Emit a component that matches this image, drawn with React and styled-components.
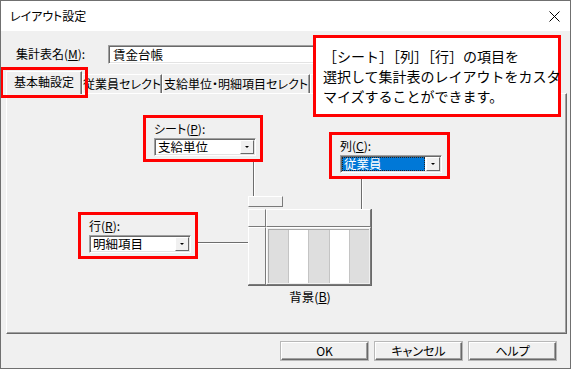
import React from 'react';
import styled, { createGlobalStyle } from 'styled-components';

const GlobalStyle = createGlobalStyle`
  html, body {
    margin: 0;
    padding: 0;
    background: #ffffff;
  }
  body {
    font-family: "Noto Sans CJK JP", "Noto Sans", sans-serif;
    font-size: 12px;
    color: #000;
  }
  * {
    box-sizing: border-box;
  }
`;

const Window = styled.div`
  position: relative;
  width: 571px;
  height: 369px;
  border: 1px solid #707070;
  background: #f0f0f0;
  display: flex;
  flex-direction: column;
  overflow: hidden;
  font-feature-settings: "palt";
`;

const TitleBar = styled.div`
  flex: none;
  height: 30px;
  background: #fff;
  display: flex;
  align-items: center;
  justify-content: space-between;
  padding: 0 10px 0 9px;
`;

const Title = styled.span`
  font-size: 12px;
  line-height: 14px;
`;

const Body = styled.div`
  flex: 1;
  display: flex;
  flex-direction: column;
  padding: 0 3px 0 5px;
`;

const NameRow = styled.div`
  display: flex;
  align-items: center;
  height: 18px;
  margin-top: 14px;
  padding-left: 10px;
`;

const FieldLabel = styled.span`
  width: 92px;
  font-size: 12px;
  line-height: 14px;
`;

const Sunken = styled.div`
  background: #fff;
  border-top: 1px solid #a0a0a0;
  border-left: 1px solid #a0a0a0;
  border-bottom: 1px solid #fff;
  border-right: 1px solid #fff;
  box-shadow: inset 1px 1px 0 #696969, inset -1px -1px 0 #e3e3e3;
`;

const TextInput = styled(Sunken)`
  flex: 1;
  height: 19px;
  margin-right: 9px;
  padding-left: 4px;
  font-size: 12.5px;
  line-height: 17px;
`;

const TabStrip = styled.div`
  position: relative;
  z-index: 1;
  display: flex;
  align-items: flex-end;
  height: 22px;
  margin-top: 8px;
`;

const Tab = styled.div`
  flex: none;
  width: ${p => p.$w}px;
  height: ${p => (p.$active ? 23 : 19)}px;
  margin-bottom: ${p => (p.$active ? -1 : 0)}px;
  padding-bottom: ${p => (p.$active ? 3 : 1)}px;
  background: #f0f0f0;
  border-top: 1px solid #fff;
  border-left: 1px solid #fff;
  border-right: 1px solid #696969;
  box-shadow: inset -1px 0 0 #a0a0a0;
  display: flex;
  align-items: center;
  justify-content: center;
  white-space: nowrap;
  overflow: hidden;
  font-size: 12px;
`;

const Panel = styled.div`
  position: relative;
  height: 241px;
  border-top: 1px solid #fff;
  border-left: 1px solid #fff;
  border-right: 1px solid #696969;
  border-bottom: 1px solid #696969;
  box-shadow: inset -1px -1px 0 #a0a0a0;
`;

const Group = styled.div`
  position: absolute;
  left: ${p => p.$x}px;
  top: ${p => p.$y}px;
  width: ${p => p.$w}px;
  border: 3px solid #ff0000;
  padding: 3px 3px 3px 8px;
  display: flex;
  flex-direction: column;
  gap: 2px;
`;

const GroupLabel = styled.span`
  font-size: 12px;
  line-height: 15px;
`;

const Combo = styled(Sunken)`
  width: 102px;
  height: 18px;
  display: flex;
  padding: 1px;
`;

const ComboValue = styled.div`
  flex: 1;
  margin-right: 1px;
  padding-left: 2px;
  font-size: 12.5px;
  line-height: 14px;
  background: ${p => (p.$selected ? '#0078d7' : 'transparent')};
  color: ${p => (p.$selected ? '#fff' : '#000')};
  outline: ${p => (p.$selected ? '1px dotted #222' : 'none')};
  outline-offset: -1px;
`;

const ArrowButton = styled.div`
  width: 14px;
  background: #f0f0f0;
  border-top: 1px solid #fff;
  border-left: 1px solid #fff;
  border-right: 1px solid #696969;
  border-bottom: 1px solid #696969;
  display: flex;
  align-items: center;
  justify-content: center;

  &::after {
    content: '';
    border-left: 2px solid transparent;
    border-right: 2px solid transparent;
    border-top: 2px solid #000;
  }
`;

const Connector = styled.div`
  position: absolute;
  left: ${p => p.$x}px;
  top: ${p => p.$y}px;
  width: ${p => (p.$vertical ? 2 : p.$len)}px;
  height: ${p => (p.$vertical ? p.$len : 2)}px;
  background: #fff;
  ${p => (p.$vertical ? 'border-left: 1px solid #6d6d6d;' : 'border-top: 1px solid #6d6d6d;')}
`;

const Raised = styled.div`
  background: #f0f0f0;
  border-top: 1px solid #fff;
  border-left: 1px solid #fff;
  border-right: 1px solid #7a7a7a;
  border-bottom: 1px solid #7a7a7a;
`;

const Handle = styled(Raised)`
  position: absolute;
  left: ${p => p.$x}px;
  top: ${p => p.$y}px;
  width: 35px;
  height: 11px;
`;

const Diagram = styled.div`
  position: absolute;
  left: ${p => p.$x}px;
  top: ${p => p.$y}px;
  width: 124px;
  display: flex;
  flex-direction: column;
  align-items: center;
`;

const Sheet = styled.div`
  width: 124px;
  height: 77px;
  display: grid;
  grid-template-columns: 18px 1fr;
  grid-template-rows: 18px 1fr;
  border-right: 1px solid #696969;
  border-bottom: 1px solid #696969;
`;

const StripeCell = styled(Raised)`
  padding: 1px;
  display: flex;
`;

const Stripes = styled.div`
  flex: 1;
  display: flex;
  border-top: 1px solid #a8a8a8;
  border-left: 1px solid #a8a8a8;
`;

const Stripe = styled.div`
  flex: 1;
  background: ${p => (p.$light ? '#ffffff' : '#dedede')};
  border-right: 1px solid #c4c4c4;

  &:last-child {
    border-right: none;
  }
`;

const Caption = styled.span`
  margin-top: 3px;
  font-size: 12.5px;
  line-height: 15px;
`;

const ButtonRow = styled.div`
  display: flex;
  justify-content: flex-end;
  gap: 7px;
  margin-top: 8px;
  padding-right: 11px;
`;

const Button = styled.button`
  width: 87px;
  height: 18px;
  padding: 0;
  background: #f0f0f0;
  border-top: 1px solid #fff;
  border-left: 1px solid #fff;
  border-right: 1px solid #696969;
  border-bottom: 1px solid #696969;
  box-shadow: inset -1px -1px 0 #a0a0a0, 0 0 0 1px #b8b8b8;
  font-family: inherit;
  font-size: 12px;
  line-height: 14px;
  color: #000;
  font-feature-settings: "palt";
`;

const Callout = styled.div`
  position: absolute;
  z-index: 3;
  left: 312px;
  top: 34px;
  width: 248px;
  height: 82px;
  background: #fff;
  border: 3px solid #ff0000;
  padding: 8px 4px 0 7px;
  font-size: 14px;
  line-height: 20px;
  font-feature-settings: normal;
  white-space: nowrap;
`;

const TabHighlight = styled.div`
  position: absolute;
  z-index: 2;
  left: -1px;
  top: 66px;
  width: 88px;
  height: 31px;
  border: 3px solid #ff0000;
`;

const CloseIcon = () => (
  <svg width="11" height="11" viewBox="0 0 11 11">
    <path d="M0.5 0.5 L10.5 10.5 M10.5 0.5 L0.5 10.5" stroke="#000" strokeWidth="1" fill="none" />
  </svg>
);

const ComboBox = ({ value, selected }) => (
  <Combo>
    <ComboValue $selected={selected}>{value}</ComboValue>
    <ArrowButton />
  </Combo>
);

const tabs = [
  { label: '基本軸設定', w: 76, active: true },
  { label: '従業員セレクト', w: 80 },
  { label: '支給単位・明細項目セレクト', w: 148 },
  { label: '', w: 90 },
];

export default function App() {
  return (
    <>
      <GlobalStyle />
      <Window>
        <TitleBar>
          <Title>レイアウト設定</Title>
          <CloseIcon />
        </TitleBar>
        <Body>
          <NameRow>
            <FieldLabel>集計表名(<u>M</u>):</FieldLabel>
            <TextInput>賃金台帳</TextInput>
          </NameRow>
          <TabStrip>
            {tabs.map((t, i) => (
              <Tab key={i} $w={t.w} $active={t.active}>{t.label}</Tab>
            ))}
          </TabStrip>
          <Panel>
            <Connector $vertical $x={246} $y={68} $len={34} />
            <Connector $vertical $x={354} $y={85} $len={30} />
            <Connector $x={191} $y={148} $len={50} />

            <Group $x={136} $y={21} $w={120}>
              <GroupLabel>シート(<u>P</u>):</GroupLabel>
              <ComboBox value="支給単位" />
            </Group>

            <Group $x={322} $y={38} $w={121}>
              <GroupLabel>列(<u>C</u>):</GroupLabel>
              <ComboBox value="従業員" selected />
            </Group>

            <Group $x={71} $y={118} $w={120}>
              <GroupLabel>行(<u>R</u>):</GroupLabel>
              <ComboBox value="明細項目" />
            </Group>

            <Handle $x={241} $y={102} />

            <Diagram $x={241} $y={115}>
              <Sheet>
                <Raised />
                <Raised />
                <Raised />
                <StripeCell>
                  <Stripes>
                    <Stripe />
                    <Stripe $light />
                    <Stripe />
                    <Stripe $light />
                    <Stripe />
                  </Stripes>
                </StripeCell>
              </Sheet>
              <Caption>背景(<u>B</u>)</Caption>
            </Diagram>
          </Panel>
          <ButtonRow>
            <Button>OK</Button>
            <Button>キャンセル</Button>
            <Button>ヘルプ</Button>
          </ButtonRow>
        </Body>
        <TabHighlight />
        <Callout>
          ［シート］［列］［行］の項目を<br />
          選択して集計表のレイアウトをカスタ<br />
          マイズすることができます。
        </Callout>
      </Window>
    </>
  );
}
